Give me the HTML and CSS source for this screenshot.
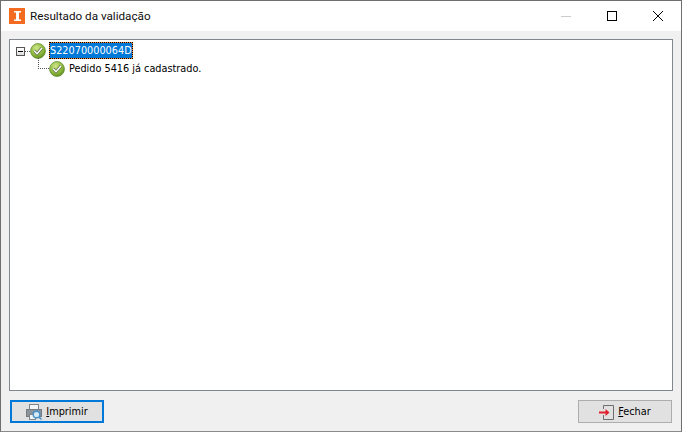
FILE: index.html
```html
<!DOCTYPE html>
<html lang="pt">
<head>
<meta charset="utf-8">
<title>Resultado da validação</title>
<link rel="stylesheet" href="styles.css">
</head>
<body>
<div class="window">
  <header class="titlebar">
    <svg class="app-icon" width="16" height="16" viewBox="0 0 16 16"><rect width="16" height="16" fill="#f26b21"/><path d="M5 3h7v1.500h-2v7h2V13H5v-1.500h2v-7H5z" fill="#fff"/></svg>
    <span class="title">Resultado da validação</span>
    <div class="controls">
      <span class="ctl"><svg width="12" height="12" viewBox="0 0 12 12"><path d="M1 6.500h10" stroke="#ccc"/></svg></span>
      <span class="ctl"><svg width="12" height="12" viewBox="0 0 12 12"><rect x="1.500" y="1.500" width="9" height="9" fill="none" stroke="#000"/></svg></span>
      <span class="ctl"><svg width="12" height="12" viewBox="0 0 12 12"><path d="M1 1l10 10M11 1L1 11" stroke="#000" fill="none"/></svg></span>
    </div>
  </header>
  <main class="content">
    <div class="tree">
      <div class="node root">
        <span class="expander"></span>
        <span class="dots-h"></span>
        <svg class="ok" width="16" height="16" viewBox="0 0 16 16"><use href="#okicon"/></svg>
        <span class="label selected">S22070000064D</span>
      </div>
      <div class="node child">
        <span class="dots-l"></span>
        <svg class="ok" width="16" height="16" viewBox="0 0 16 16"><use href="#okicon"/></svg>
        <span class="label">Pedido 5416 já cadastrado.</span>
      </div>
    </div>
    <footer class="actions">
      <button class="btn primary" type="button">
        <svg width="16" height="16" viewBox="0 0 16 16"><rect x="3.500" y="0.500" width="9" height="5" fill="#f4f5f6" stroke="#7d858c"/><rect x="0.500" y="5.500" width="15" height="7" fill="#8b949b" stroke="#747c83"/><rect x="3.500" y="10.500" width="6" height="5" fill="#f2f2f2" stroke="#7d858c"/><circle cx="10.500" cy="10.500" r="3.300" fill="#d5e8f6" stroke="#4a90c8" stroke-width="1.400"/><path d="M13 13l2.500 2.500" stroke="#4a90c8" stroke-width="1.500"/></svg>
        <span class="btn-text"><u>I</u>mprimir</span>
      </button>
      <button class="btn" type="button">
        <svg width="15" height="16" viewBox="0 0 15 16"><path d="M4.500 5V1.500h10v14h-10V11" fill="none" stroke="#6e6e6e"/><path d="M0 8.500h7" stroke="#e0202a" stroke-width="2"/><path d="M6.500 5l4 3.500-4 3.500z" fill="#e0202a"/></svg>
        <span class="btn-text"><u>F</u>echar</span>
      </button>
    </footer>
  </main>
</div>
<svg class="defs" width="0" height="0"><defs>
  <radialGradient id="okgrad" cx="40%" cy="30%" r="75%"><stop offset="0" stop-color="#cfe58a"/><stop offset="0.6" stop-color="#8fbb3e"/><stop offset="1" stop-color="#5f8c22"/></radialGradient>
  <g id="okicon"><circle cx="8" cy="8" r="7.400" fill="url(#okgrad)" stroke="#5d8a2a" stroke-width="0.800"/><path d="M4.200 7.800l2.800 2.900L12 5" fill="none" stroke="#5a6b4a" stroke-width="2.800"/><path d="M4.200 7.800l2.800 2.900L12 5" fill="none" stroke="#fff" stroke-width="1.500"/></g>
</defs></svg>
</body>
</html>
```
FILE: styles.css
```css
html, body { margin: 0; padding: 0; height: 100%; }
body { font-family: "DejaVu Sans Condensed", "Liberation Sans", sans-serif; font-size: 10.8px; color: #000; overflow: hidden; }
.window { box-sizing: border-box; width: 682px; height: 432px; display: flex; flex-direction: column; background: #f0f0f0; border: 1px solid #6f6f6f; border-bottom-color: #8a8a8a; }
.titlebar { flex: none; height: 30px; background: #fff; display: flex; align-items: center; padding-left: 8px; }
.app-icon { flex: none; }
.title { margin-left: 5px; font-family: Roboto, sans-serif; font-size: 11.7px; color: #111; }
.controls { margin-left: auto; display: flex; height: 100%; }
.ctl { width: 46px; display: flex; align-items: center; justify-content: center; }
.content { flex: 1; display: flex; flex-direction: column; padding: 8px; min-height: 0; }
.tree { flex: 1; background: #fff; border: 1px solid #82878f; padding: 1px 0 0 6px; }
.node { display: flex; align-items: center; height: 19px; position: relative; }
.expander { box-sizing: border-box; width: 9px; height: 9px; margin-top: 2px; border: 1px solid #555; position: relative; background: linear-gradient(#fff, #ddd); }
.expander::after { content: ""; position: absolute; left: 1px; top: 3px; width: 5px; height: 1px; background: #000; }
.dots-h { width: 5px; margin-top: 2px; border-top: 1px dotted #555; }
.ok { flex: none; }
.label { margin-left: 3px; padding: 0 1px; line-height: 15px; }
.selected { padding: 0; line-height: 15px; color: #fff; border: 1px dotted #000; background: linear-gradient(#0078d7, #0078d7) padding-box, #ff8728 border-box; }
.child { padding-left: 33px; margin-top: -1px; }
.dots-l { position: absolute; left: 22px; top: -1px; width: 10px; height: 10px; border-left: 1px dotted #555; border-bottom: 1px dotted #555; }
.actions { flex: none; display: flex; justify-content: space-between; padding: 9px 1px 0; }
.btn { box-sizing: border-box; width: 94px; height: 23px; background: #e1e1e1; border: 1px solid #adadad; display: flex; align-items: center; justify-content: center; gap: 4px; padding: 0; font-family: inherit; font-size: 10.8px; color: #000; }
.primary { border: 2px solid #0078d7; }
.defs { position: absolute; }
```
